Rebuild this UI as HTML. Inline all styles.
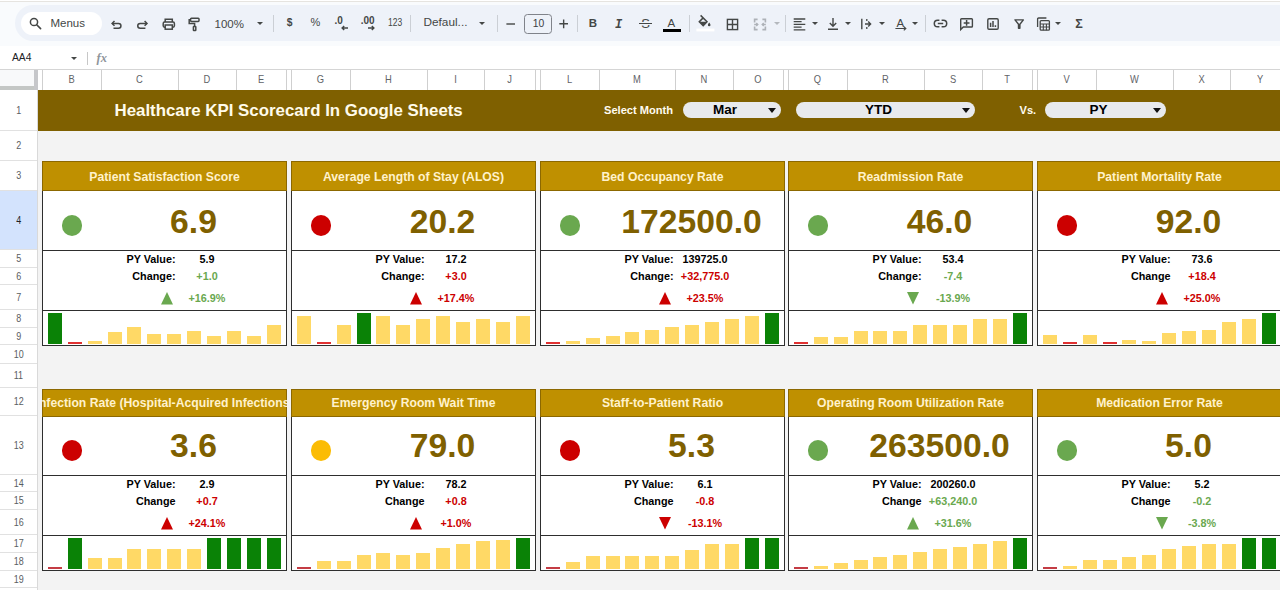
<!DOCTYPE html>
<html lang="en"><head><meta charset="utf-8"><title>Healthcare KPI Scorecard In Google Sheets</title>
<style>
*{box-sizing:border-box;margin:0;padding:0}
html,body{width:1280px;height:590px;overflow:hidden;background:#fff}
body{font-family:"Liberation Sans",Arial,sans-serif;color:#000}
#app{position:relative;width:1280px;height:590px;overflow:hidden;background:#fff}
i{font-style:normal}
/* top chrome */
.topline{position:absolute;left:0;top:1px;width:1280px;height:1px;background:#e6e4e0}
.tb-bg{position:absolute;left:0;top:2px;width:1280px;height:44px;background:#f9fbfd}
.tb{position:absolute;left:15px;top:5px;width:1300px;height:36px;border-radius:18px;background:#eef2f9}
.search{position:absolute;left:21px;top:12px;width:81px;height:23px;border-radius:12px;background:#fff}
.search span{position:absolute;left:29.5px;top:4px;font-size:11.5px;line-height:14px;color:#444746}
.tbt{position:absolute;font-size:11.5px;line-height:14px;color:#444746;white-space:nowrap}
.sep{position:absolute;top:15px;width:1px;height:17px;background:#cbcfd5}
.ico{position:absolute;overflow:visible}
.fbar{position:absolute;left:0;top:46px;width:1280px;height:23px;background:#fff}
.fbar .nm{position:absolute;left:12px;top:5px;font-size:10.3px;line-height:14px;color:#202124}
.fbar .vs{position:absolute;left:87px;top:6px;width:1px;height:13px;background:#c7c7c7}
.fbar .fx{position:absolute;left:96.5px;top:4px;font-size:12.5px;line-height:16px;color:#8f959b;font-style:italic;font-weight:bold;font-family:"Liberation Serif",serif}
/* headers */
.colhdr{position:absolute;left:0;top:69px;width:1280px;height:21px;background:#fff;border-top:1px solid #d5d5d5}
.ch{position:absolute;top:0;height:19px;line-height:20px;text-align:center;font-size:10.4px;color:#5f6368;transform:scaleX(.9)}
.cl{position:absolute;top:0;width:1px;height:20px;background:#cfcfcf}
.corner{position:absolute;left:0;top:70px;width:34px;height:16px;background:#f8f9fa}
.fz-v{position:absolute;left:34px;top:70px;width:4px;height:20px;background:#c6c7ca}
.fz-h{position:absolute;left:0;top:86px;width:34px;height:4px;background:#c4c7c5}
.rowhdr{position:absolute;left:0;top:90px;width:38px;height:500px;background:#fff;border-right:1px solid #d9d9d9}
.rh{position:absolute;left:0;width:37px;text-align:center;font-size:10.2px;color:#5a5d61;border-bottom:1px solid #e1e1e1}
.rh.sel{background:#d3e3fd;color:#1f1f1f}
/* sheet */
.sheet{position:absolute;left:38px;top:90px;width:1242px;height:500px;background:#f3f3f3;overflow:hidden}
.band{position:absolute;left:0;top:0;width:1242px;height:41px;background:#7f6000}
.title{position:absolute;left:76.5px;top:11px;font-size:16.85px;line-height:20px;font-weight:bold;color:#fffbea;white-space:nowrap}
.lbl{position:absolute;top:13px;font-size:11.1px;line-height:14px;font-weight:bold;color:#fffcf0;white-space:nowrap}
.pill{position:absolute;top:12px;height:16px;border-radius:8px;background:#e8eaed}
.pill span{position:absolute;left:0;right:14px;top:0;text-align:center;font-size:13.5px;line-height:16px;font-weight:bold;color:#000}
.dd{position:absolute;right:5px;top:6px;width:0;height:0;border-left:4px solid transparent;border-right:4px solid transparent;border-top:5px solid #111}
.card{position:absolute;width:245px}
.chd{background:#bf9000;box-shadow:inset 0 0 0 1px rgba(70,50,0,.42);color:#fff2cc;font-weight:bold;font-size:12.2px;text-align:center;white-space:nowrap;overflow:hidden;position:relative}
.chd span{position:absolute;left:50%;top:1px;transform:translateX(-50%)}
.cbody{position:relative;background:#fff;border:1px solid #2e2e2e;border-top:0}
.big{position:relative;height:58px}
.dot{position:absolute;left:18.6px;top:24.4px;width:20.8px;height:20.8px;border-radius:50%}
.val{position:absolute;left:58px;width:185px;top:7.5px;height:46px;line-height:46px;text-align:center;font-size:32.5px;transform:scaleX(1.036);font-weight:bold;color:#7f6000;white-space:nowrap}
.det{position:relative;height:61px;border-top:1px solid #2e2e2e;border-bottom:1px solid #2e2e2e}
.r{position:absolute;left:0;width:243px;font-size:10.8px;font-weight:bold;line-height:14px;white-space:nowrap}
.r .k{position:absolute;right:110.5px;top:0;text-align:right}
.r .v{position:absolute;left:135px;width:58px;text-align:center;top:0}
.r1{top:0.9px}.r2{top:17.8px}.r3{top:40px}
.tri{position:absolute;right:2.1px;top:1.4px;width:12px;height:12.4px}
.spark{position:relative;height:34px}
.spark b{position:absolute;bottom:1px;width:14px;display:block}
.spark .g{background:#0a8206}.spark .r{background:#e03131}.spark .rd{background:#c43c44}.spark .y{background:#ffd966}
.tdd{position:absolute;top:22px;width:0;height:0;border-left:3px solid transparent;border-right:3px solid transparent;border-top:3.5px solid #444746}
.tdd.dis{border-top-color:#b4b8bd}
.fsz{position:absolute;left:524px;top:14px;width:28px;height:20px;border:1px solid #80838a;border-radius:3.5px;text-align:center;font-size:11.5px;line-height:16px;color:#3c4043}
.fsz span{display:inline-block;transform:scaleX(.9)}
.rh span{display:inline-block;transform:scaleX(.88)}

</style></head>
<body>
<div id="app">
<div class="topline"></div>
<div class="tb-bg"></div>
<div class="tb"></div>
<div class="search"><svg class="ico" style="left:8px;top:5px" width="13" height="13" viewBox="0 0 13 13"><circle cx="5" cy="5" r="3.6" fill="none" stroke="#444746" stroke-width="1.5"/><path d="M7.7 7.7 L11.6 11.6" stroke="#444746" stroke-width="1.6" stroke-linecap="round"/></svg><span>Menus</span></div>
<!-- undo -->
<svg class="ico" style="left:110px;top:17px" width="14" height="14" viewBox="0 0 14 14" fill="none" stroke="#444746" stroke-width="1.5"><path d="M4.5 4.0 L2.1 6.4 L4.5 8.8"/><path d="M2.3 6.4 H8.5 a2.45 2.45 0 0 1 0 4.9 H3.5"/></svg>
<!-- redo -->
<svg class="ico" style="left:135px;top:17px" width="14" height="14" viewBox="0 0 14 14" fill="none" stroke="#444746" stroke-width="1.5"><path d="M9.6 4.0 L12 6.4 L9.6 8.8"/><path d="M11.8 6.4 H5.2 a2.45 2.45 0 0 0 0 4.9 H10.4"/></svg>
<!-- print -->
<svg class="ico" style="left:161px;top:17px" width="16" height="14" viewBox="0 0 16 14" fill="none" stroke="#444746" stroke-width="1.5"><path d="M4.2 5 V2.3 H11.3 V5"/><rect x="2.2" y="5" width="11.2" height="5.2" rx="1.4"/><rect x="4.2" y="8" width="7.1" height="4.2" fill="#eef2f9"/></svg>
<!-- paint format -->
<svg class="ico" style="left:187px;top:16px" width="15" height="16" viewBox="0 0 15 16" fill="none" stroke="#444746" stroke-width="1.5"><rect x="3.6" y="2.2" width="8.4" height="3.2" rx="0.8"/><path d="M3.6 3.8 H2.2 V7.6 H7.6 V10.4"/><rect x="6.4" y="10.6" width="2.4" height="3.8" rx="0.5"/></svg>
<div class="tbt" style="left:214.5px;top:17px">100%</div>
<i class="tdd" style="left:256.5px"></i>
<div class="sep" style="left:273px"></div>
<div class="tbt" style="left:286.7px;top:16px;font-size:10.3px;font-weight:bold">$</div>
<div class="tbt" style="left:310.5px;top:14.7px;font-size:11px">%</div>
<div class="tbt" style="left:334.5px;top:14.4px;font-size:10px;font-weight:bold">.0</div>
<svg class="ico" style="left:341.3px;top:25.1px" width="8" height="6" viewBox="0 0 8 6" fill="none" stroke="#444746" stroke-width="1.4"><path d="M7 3 H1.2 M3.2 0.9 L1.1 3 L3.2 5.1"/></svg>
<div class="tbt" style="left:360.7px;top:14.4px;font-size:10px;font-weight:bold">.00</div>
<svg class="ico" style="left:366.8px;top:25.1px" width="8" height="6" viewBox="0 0 8 6" fill="none" stroke="#444746" stroke-width="1.4"><path d="M1 3 H6.8 M4.8 0.9 L6.9 3 L4.8 5.1"/></svg>
<div class="tbt" style="left:387.5px;top:16.4px;font-size:10px;transform:scaleX(.85);transform-origin:0 0">123</div>
<div class="sep" style="left:410px"></div>
<div class="tbt" style="left:423.5px;top:15.2px;font-size:11.8px">Defaul...</div>
<i class="tdd" style="left:479px"></i>
<div class="sep" style="left:497px"></div>
<svg class="ico" style="left:505px;top:18px" width="12" height="12" viewBox="0 0 12 12"><path d="M1.4 6 H10" stroke="#444746" stroke-width="1.4"/></svg>
<div class="fsz"><span>10</span></div>
<svg class="ico" style="left:558px;top:18px" width="12" height="12" viewBox="0 0 12 12"><path d="M1.3 5.8 H10 M5.65 1.5 V10.2" stroke="#444746" stroke-width="1.4"/></svg>
<div class="sep" style="left:577px"></div>
<div class="tbt" style="left:588.7px;top:16.3px;font-size:11.5px;font-weight:bold">B</div>
<div class="tbt" style="left:615px;top:18px;font-family:'Liberation Mono',monospace;font-style:italic;font-weight:bold;font-size:12px;width:9px;overflow:hidden">I</div>
<!-- strikethrough -->
<div class="tbt" style="left:641.2px;top:17.2px;font-size:13px">S</div>
<div style="position:absolute;left:639px;top:22.8px;width:13px;height:1.4px;background:#444746;box-shadow:0 -1px 0 #eef2f9,0 1px 0 #eef2f9"></div>
<!-- text colour -->
<div class="tbt" style="left:667.5px;top:15.5px;font-size:11.5px">A</div>
<div style="position:absolute;left:663px;top:28.5px;width:18px;height:3px;background:#000"></div>
<div class="sep" style="left:689px"></div>
<!-- fill colour -->
<svg class="ico" style="left:696px;top:14px" width="19" height="18" viewBox="0 0 19 18"><path d="M4.6 1.4 L11 7.8 L7.2 11.6 L3.3 7.7 L6.9 4.1" fill="none" stroke="#444746" stroke-width="1.5"/><path d="M3.6 7.8 H10.8 L7.2 11.4 Z" fill="#444746"/><path d="M13.2 8.6 c.9 1.2 1.3 1.8 1.3 2.4 a1.3 1.3 0 0 1 -2.6 0 c0 -.6 .4 -1.2 1.3 -2.4z" fill="#444746"/><rect x="0.4" y="14.6" width="18" height="2.8" fill="#fff"/></svg>
<!-- borders -->
<svg class="ico" style="left:726px;top:18px" width="13" height="13" viewBox="0 0 13 13" fill="none" stroke="#444746" stroke-width="1.4"><rect x="1.4" y="1.4" width="10.2" height="10.2"/><path d="M6.5 1.4 V11.6 M1.4 6.5 H11.6"/></svg>
<!-- merge (disabled) -->
<svg class="ico" style="left:753px;top:18px" width="14" height="13" viewBox="0 0 14 13" fill="none" stroke="#adb1b7" stroke-width="1.6"><path d="M4.6 1.4 H1.6 V4.4 M9.4 1.4 H12.4 V4.4 M4.6 11.6 H1.6 V8.6 M9.4 11.6 H12.4 V8.6"/><path d="M1.2 6.5 H4.6 M3.3 5.1 L4.8 6.5 L3.3 7.9 M12.8 6.5 H9.4 M10.7 5.1 L9.2 6.5 L10.7 7.9" stroke-width="1.3"/></svg>
<i class="tdd dis" style="left:773.5px"></i>
<div class="sep" style="left:785px"></div>
<!-- h-align -->
<svg class="ico" style="left:793px;top:18px" width="13" height="13" viewBox="0 0 13 13" stroke="#444746" stroke-width="1.3"><path d="M0.7 1 H12.3 M0.7 3.7 H8.6 M0.7 6.4 H12.3 M0.7 9.1 H8.6 M0.7 11.8 H12.3"/></svg>
<i class="tdd" style="left:811.5px"></i>
<!-- v-align -->
<svg class="ico" style="left:827px;top:17px" width="12" height="14" viewBox="0 0 12 14" fill="none" stroke="#444746" stroke-width="1.4"><path d="M6 1 V9 M2.8 6 L6 9.2 L9.2 6 M1 12.3 H11"/></svg>
<i class="tdd" style="left:845px"></i>
<!-- wrap -->
<svg class="ico" style="left:860px;top:18px" width="12" height="12" viewBox="0 0 12 12" fill="none" stroke="#444746" stroke-width="1.4"><path d="M1.8 0.8 V11.2"/><path d="M5 6 H10.4 M8.2 3.6 L10.6 6 L8.2 8.4" /><path d="M6.8 1 V3 M6.8 9 V11" stroke-width="1.3"/></svg>
<i class="tdd" style="left:878.5px"></i>
<!-- rotate -->
<div class="tbt" style="left:896.5px;top:15.5px;font-size:11.5px">A</div>
<svg class="ico" style="left:895px;top:26px" width="12" height="5" viewBox="0 0 12 5" fill="none" stroke="#444746" stroke-width="1.2"><path d="M0.4 2.5 H10.6 M8.8 0.6 L10.8 2.5 L8.8 4.4"/></svg>
<i class="tdd" style="left:911.5px"></i>
<div class="sep" style="left:925px"></div>
<!-- link -->
<svg class="ico" style="left:933px;top:19px" width="15" height="9" viewBox="0 0 15 9" fill="none" stroke="#444746" stroke-width="1.5"><path d="M6.4 1.2 H4.6 a3.3 3.3 0 0 0 0 6.6 H6.4 M8.6 1.2 H10.4 a3.3 3.3 0 0 1 0 6.6 H8.6 M4.8 4.5 H10.2"/></svg>
<!-- comment -->
<svg class="ico" style="left:959px;top:17px" width="15" height="14" viewBox="0 0 15 14" fill="none" stroke="#444746" stroke-width="1.4"><path d="M1.7 12.6 V2.6 a0.8 0.8 0 0 1 .8 -.8 H12.6 a0.8 0.8 0 0 1 .8 .8 V9.2 a0.8 0.8 0 0 1 -.8 .8 H4.3 Z"/><path d="M7.6 3.1 V8.7 M4.7 5.9 H10.5" stroke-width="1.5"/></svg>
<!-- chart -->
<svg class="ico" style="left:986px;top:17px" width="14" height="14" viewBox="0 0 14 14" fill="none" stroke="#444746" stroke-width="1.4"><rect x="1.8" y="1.8" width="10.4" height="10.4" rx="1.2"/><path d="M4.6 5.8 V10 M7 4 V10 M9.4 8.2 V10" stroke-width="1.5"/></svg>
<!-- filter -->
<svg class="ico" style="left:1013px;top:18px" width="12" height="12" viewBox="0 0 12 12" fill="none" stroke="#444746" stroke-width="1.4"><path d="M2 1.9 H10.4 L6.9 6.2 V10.2 H5.5 V6.2 Z" stroke-linejoin="round"/></svg>
<!-- table views -->
<svg class="ico" style="left:1036px;top:16px" width="15" height="16" viewBox="0 0 15 16" fill="none" stroke="#444746" stroke-width="1.3"><path d="M1.6 11 V3 a1 1 0 0 1 1 -1 H10.4"/><rect x="4.2" y="4.6" width="9.2" height="9.6" rx="1"/><path d="M4.2 8 H13.4 M4.2 11 H13.4 M7.3 8 V14.2 M10.4 8 V14.2" stroke-width="1.1"/></svg>
<i class="tdd" style="left:1055px"></i>
<!-- sigma -->
<div class="tbt" style="left:1075.3px;top:17px;font-size:12.5px;font-weight:bold">&Sigma;</div>
<!-- formula bar -->
<div class="fbar"><span class="nm">AA4</span><i class="tdd" style="left:70.7px;top:10.5px"></i><i class="vs"></i><span class="fx">fx</span></div>
<div class="colhdr">
<div class="ch" style="left:42px;width:59px">B</div>
<div class="ch" style="left:101px;width:77px">C</div>
<div class="ch" style="left:178px;width:58px">D</div>
<div class="ch" style="left:236px;width:50px">E</div>
<div class="ch" style="left:291px;width:59px">G</div>
<div class="ch" style="left:350px;width:77px">H</div>
<div class="ch" style="left:427px;width:57px">I</div>
<div class="ch" style="left:484px;width:51px">J</div>
<div class="ch" style="left:540px;width:59px">L</div>
<div class="ch" style="left:599px;width:76px">M</div>
<div class="ch" style="left:675px;width:58px">N</div>
<div class="ch" style="left:733px;width:50px">O</div>
<div class="ch" style="left:788px;width:59px">Q</div>
<div class="ch" style="left:847px;width:77px">R</div>
<div class="ch" style="left:924px;width:58px">S</div>
<div class="ch" style="left:982px;width:50px">T</div>
<div class="ch" style="left:1037px;width:59px">V</div>
<div class="ch" style="left:1096px;width:77px">W</div>
<div class="ch" style="left:1173px;width:57px">X</div>
<div class="ch" style="left:1230px;width:60px">Y</div>
<i class="cl" style="left:42px"></i>
<i class="cl" style="left:101px"></i>
<i class="cl" style="left:178px"></i>
<i class="cl" style="left:235.5px"></i>
<i class="cl" style="left:286px"></i>
<i class="cl" style="left:291px"></i>
<i class="cl" style="left:350px"></i>
<i class="cl" style="left:427px"></i>
<i class="cl" style="left:484px"></i>
<i class="cl" style="left:535px"></i>
<i class="cl" style="left:540px"></i>
<i class="cl" style="left:599px"></i>
<i class="cl" style="left:675px"></i>
<i class="cl" style="left:733px"></i>
<i class="cl" style="left:783px"></i>
<i class="cl" style="left:788px"></i>
<i class="cl" style="left:847px"></i>
<i class="cl" style="left:924px"></i>
<i class="cl" style="left:982px"></i>
<i class="cl" style="left:1032px"></i>
<i class="cl" style="left:1037px"></i>
<i class="cl" style="left:1096px"></i>
<i class="cl" style="left:1173px"></i>
<i class="cl" style="left:1230px"></i>
</div>
<div class="corner"></div><div class="fz-v"></div><div class="fz-h"></div>
<div class="rowhdr">
<div class="rh" style="top:0px;height:41px;line-height:41px"><span>1</span></div>
<div class="rh" style="top:41px;height:30px;line-height:30px"><span>2</span></div>
<div class="rh" style="top:71px;height:30px;line-height:30px"><span>3</span></div>
<div class="rh sel" style="top:101px;height:59px;line-height:59px"><span>4</span></div>
<div class="rh" style="top:160px;height:18px;line-height:18px"><span>5</span></div>
<div class="rh" style="top:178px;height:17px;line-height:17px"><span>6</span></div>
<div class="rh" style="top:195px;height:25px;line-height:25px"><span>7</span></div>
<div class="rh" style="top:220px;height:18px;line-height:18px"><span>8</span></div>
<div class="rh" style="top:238px;height:17px;line-height:17px"><span>9</span></div>
<div class="rh" style="top:255px;height:19px;line-height:19px"><span>10</span></div>
<div class="rh" style="top:274px;height:24px;line-height:24px"><span>11</span></div>
<div class="rh" style="top:298px;height:28px;line-height:28px"><span>12</span></div>
<div class="rh" style="top:326px;height:59px;line-height:59px"><span>13</span></div>
<div class="rh" style="top:385px;height:17px;line-height:17px"><span>14</span></div>
<div class="rh" style="top:402px;height:18px;line-height:18px"><span>15</span></div>
<div class="rh" style="top:420px;height:25px;line-height:25px"><span>16</span></div>
<div class="rh" style="top:445px;height:18px;line-height:18px"><span>17</span></div>
<div class="rh" style="top:463px;height:18px;line-height:18px"><span>18</span></div>
<div class="rh" style="top:481px;height:17px;line-height:17px"><span>19</span></div>
<div class="rh" style="top:498px;height:18px;line-height:18px"><span>20</span></div>
</div>
<div class="sheet">
<div class="band"><div class="title">Healthcare KPI Scorecard In Google Sheets</div><div class="lbl" style="left:566px">Select Month</div><div class="pill" style="left:645px;width:98px"><span>Mar</span><i class="dd"></i></div><div class="pill" style="left:758px;width:179px"><span>YTD</span><i class="dd"></i></div><div class="lbl" style="left:981.5px">Vs.</div><div class="pill" style="left:1007px;width:121px"><span>PY</span><i class="dd"></i></div></div>
<div class="card" style="left:4px;top:71px">
 <div class="chd" style="height:30px;line-height:30px"><span>Patient Satisfaction Score</span></div>
 <div class="cbody">
  <div class="big" style="height:59px"><i class="dot" style="background:#6aa84f;top:24.4px"></i><div class="val" style="top:7.5px">6.9</div></div>
  <div class="det">
   <div class="r r1"><span class="k">PY Value:</span><span class="v">5.9</span></div>
   <div class="r r2"><span class="k">Change:</span><span class="v" style="color:#6aa84f">+1.0</span></div>
   <div class="r r3"><span class="k"><svg class="tri" viewBox="0 0 12 12" preserveAspectRatio="none"><path d="M6 0 L12 12 L0 12 Z" fill="#6aa84f"/></svg></span><span class="v" style="color:#6aa84f">+16.9%</span></div>
  </div>
  <div class="spark"><b class="g" style="left:5.0px;height:31.1px"></b><b class="r" style="left:24.9px;height:1.6px"></b><b class="y" style="left:44.7px;height:2.6px"></b><b class="y" style="left:64.6px;height:11.6px"></b><b class="y" style="left:84.4px;height:16.7px"></b><b class="y" style="left:104.3px;height:10px"></b><b class="y" style="left:124.2px;height:10px"></b><b class="y" style="left:144.0px;height:13px"></b><b class="y" style="left:163.9px;height:7.7px"></b><b class="y" style="left:183.7px;height:12.8px"></b><b class="y" style="left:203.6px;height:7.7px"></b><b class="y" style="left:223.5px;height:18.7px"></b></div>
 </div>
</div>
<div class="card" style="left:253px;top:71px">
 <div class="chd" style="height:30px;line-height:30px"><span>Average Length of Stay (ALOS)</span></div>
 <div class="cbody">
  <div class="big" style="height:59px"><i class="dot" style="background:#cc0000;top:24.4px"></i><div class="val" style="top:7.5px">20.2</div></div>
  <div class="det">
   <div class="r r1"><span class="k">PY Value:</span><span class="v">17.2</span></div>
   <div class="r r2"><span class="k">Change:</span><span class="v" style="color:#cc0000">+3.0</span></div>
   <div class="r r3"><span class="k"><svg class="tri" viewBox="0 0 12 12" preserveAspectRatio="none"><path d="M6 0 L12 12 L0 12 Z" fill="#cc0000"/></svg></span><span class="v" style="color:#cc0000">+17.4%</span></div>
  </div>
  <div class="spark"><b class="y" style="left:5.0px;height:28px"></b><b class="r" style="left:24.9px;height:1.6px"></b><b class="y" style="left:44.7px;height:18.7px"></b><b class="g" style="left:64.6px;height:31.1px"></b><b class="y" style="left:84.4px;height:28px"></b><b class="y" style="left:104.3px;height:18.7px"></b><b class="y" style="left:124.2px;height:24.6px"></b><b class="y" style="left:144.0px;height:28px"></b><b class="y" style="left:163.9px;height:21.7px"></b><b class="y" style="left:183.7px;height:24.6px"></b><b class="y" style="left:203.6px;height:21.7px"></b><b class="y" style="left:223.5px;height:28px"></b></div>
 </div>
</div>
<div class="card" style="left:502px;top:71px">
 <div class="chd" style="height:30px;line-height:30px"><span>Bed Occupancy Rate</span></div>
 <div class="cbody">
  <div class="big" style="height:59px"><i class="dot" style="background:#6aa84f;top:24.4px"></i><div class="val" style="top:7.5px">172500.0</div></div>
  <div class="det">
   <div class="r r1"><span class="k">PY Value:</span><span class="v">139725.0</span></div>
   <div class="r r2"><span class="k">Change:</span><span class="v" style="color:#cc0000">+32,775.0</span></div>
   <div class="r r3"><span class="k"><svg class="tri" viewBox="0 0 12 12" preserveAspectRatio="none"><path d="M6 0 L12 12 L0 12 Z" fill="#cc0000"/></svg></span><span class="v" style="color:#cc0000">+23.5%</span></div>
  </div>
  <div class="spark"><b class="r" style="left:5.0px;height:1.6px"></b><b class="y" style="left:24.9px;height:3.5px"></b><b class="y" style="left:44.7px;height:6.5px"></b><b class="y" style="left:64.6px;height:8.5px"></b><b class="y" style="left:84.4px;height:11.6px"></b><b class="y" style="left:104.3px;height:13.6px"></b><b class="y" style="left:124.2px;height:16.7px"></b><b class="y" style="left:144.0px;height:19.5px"></b><b class="y" style="left:163.9px;height:22.5px"></b><b class="y" style="left:183.7px;height:25.2px"></b><b class="y" style="left:203.6px;height:28.2px"></b><b class="g" style="left:223.5px;height:31.1px"></b></div>
 </div>
</div>
<div class="card" style="left:750px;top:71px">
 <div class="chd" style="height:30px;line-height:30px"><span>Readmission Rate</span></div>
 <div class="cbody">
  <div class="big" style="height:59px"><i class="dot" style="background:#6aa84f;top:24.4px"></i><div class="val" style="top:7.5px">46.0</div></div>
  <div class="det">
   <div class="r r1"><span class="k">PY Value:</span><span class="v">53.4</span></div>
   <div class="r r2"><span class="k">Change:</span><span class="v" style="color:#6aa84f">-7.4</span></div>
   <div class="r r3"><span class="k"><svg class="tri" viewBox="0 0 12 12" preserveAspectRatio="none"><path d="M0 0 L12 0 L6 12 Z" fill="#6aa84f"/></svg></span><span class="v" style="color:#6aa84f">-13.9%</span></div>
  </div>
  <div class="spark"><b class="r" style="left:5.0px;height:1.6px"></b><b class="y" style="left:24.9px;height:6.9px"></b><b class="y" style="left:44.7px;height:6.9px"></b><b class="y" style="left:64.6px;height:12.8px"></b><b class="y" style="left:84.4px;height:12.8px"></b><b class="y" style="left:104.3px;height:12.8px"></b><b class="y" style="left:124.2px;height:18.7px"></b><b class="y" style="left:144.0px;height:18.7px"></b><b class="y" style="left:163.9px;height:18.7px"></b><b class="y" style="left:183.7px;height:25.2px"></b><b class="y" style="left:203.6px;height:25.2px"></b><b class="g" style="left:223.5px;height:31.1px"></b></div>
 </div>
</div>
<div class="card" style="left:999px;top:71px">
 <div class="chd" style="height:30px;line-height:30px"><span>Patient Mortality Rate</span></div>
 <div class="cbody">
  <div class="big" style="height:59px"><i class="dot" style="background:#cc0000;top:24.4px"></i><div class="val" style="top:7.5px">92.0</div></div>
  <div class="det">
   <div class="r r1"><span class="k">PY Value:</span><span class="v">73.6</span></div>
   <div class="r r2"><span class="k">Change</span><span class="v" style="color:#cc0000">+18.4</span></div>
   <div class="r r3"><span class="k"><svg class="tri" viewBox="0 0 12 12" preserveAspectRatio="none"><path d="M6 0 L12 12 L0 12 Z" fill="#cc0000"/></svg></span><span class="v" style="color:#cc0000">+25.0%</span></div>
  </div>
  <div class="spark"><b class="y" style="left:5.0px;height:9.1px"></b><b class="r" style="left:24.9px;height:1.6px"></b><b class="y" style="left:44.7px;height:9.1px"></b><b class="r" style="left:64.6px;height:1.6px"></b><b class="y" style="left:84.4px;height:4.1px"></b><b class="y" style="left:104.3px;height:2.8px"></b><b class="y" style="left:124.2px;height:10.8px"></b><b class="y" style="left:144.0px;height:12.8px"></b><b class="y" style="left:163.9px;height:14.4px"></b><b class="y" style="left:183.7px;height:22.5px"></b><b class="y" style="left:203.6px;height:24.6px"></b><b class="g" style="left:223.5px;height:31.1px"></b></div>
 </div>
</div>
<div class="card" style="left:4px;top:299px">
 <div class="chd" style="height:28px;line-height:28px"><span style="top:0">Infection Rate (Hospital-Acquired Infections)</span></div>
 <div class="cbody">
  <div class="big" style="height:58px"><i class="dot" style="background:#cc0000;top:23.0px"></i><div class="val" style="top:6.2px">3.6</div></div>
  <div class="det">
   <div class="r r1"><span class="k">PY Value:</span><span class="v">2.9</span></div>
   <div class="r r2"><span class="k">Change</span><span class="v" style="color:#cc0000">+0.7</span></div>
   <div class="r r3"><span class="k"><svg class="tri" viewBox="0 0 12 12" preserveAspectRatio="none"><path d="M6 0 L12 12 L0 12 Z" fill="#cc0000"/></svg></span><span class="v" style="color:#cc0000">+24.1%</span></div>
  </div>
  <div class="spark"><b class="r rd" style="left:5.0px;height:2px"></b><b class="g" style="left:24.9px;height:31.1px"></b><b class="y" style="left:44.7px;height:10.6px"></b><b class="y" style="left:64.6px;height:10.6px"></b><b class="y" style="left:84.4px;height:20.5px"></b><b class="y" style="left:104.3px;height:20.5px"></b><b class="y" style="left:124.2px;height:20.5px"></b><b class="y" style="left:144.0px;height:20.5px"></b><b class="g" style="left:163.9px;height:31.1px"></b><b class="g" style="left:183.7px;height:31.1px"></b><b class="g" style="left:203.6px;height:31.1px"></b><b class="g" style="left:223.5px;height:31.1px"></b></div>
 </div>
</div>
<div class="card" style="left:253px;top:299px">
 <div class="chd" style="height:28px;line-height:28px"><span style="top:0">Emergency Room Wait Time</span></div>
 <div class="cbody">
  <div class="big" style="height:58px"><i class="dot" style="background:#fbbc04;top:23.0px"></i><div class="val" style="top:6.2px">79.0</div></div>
  <div class="det">
   <div class="r r1"><span class="k">PY Value:</span><span class="v">78.2</span></div>
   <div class="r r2"><span class="k">Change</span><span class="v" style="color:#cc0000">+0.8</span></div>
   <div class="r r3"><span class="k"><svg class="tri" viewBox="0 0 12 12" preserveAspectRatio="none"><path d="M6 0 L12 12 L0 12 Z" fill="#cc0000"/></svg></span><span class="v" style="color:#cc0000">+1.0%</span></div>
  </div>
  <div class="spark"><b class="r rd" style="left:5.0px;height:2px"></b><b class="y" style="left:24.9px;height:8.5px"></b><b class="y" style="left:44.7px;height:8.5px"></b><b class="y" style="left:64.6px;height:14.4px"></b><b class="y" style="left:84.4px;height:15.6px"></b><b class="y" style="left:104.3px;height:14.4px"></b><b class="y" style="left:124.2px;height:15.6px"></b><b class="y" style="left:144.0px;height:21.5px"></b><b class="y" style="left:163.9px;height:25.2px"></b><b class="y" style="left:183.7px;height:28px"></b><b class="y" style="left:203.6px;height:29.5px"></b><b class="g" style="left:223.5px;height:31.1px"></b></div>
 </div>
</div>
<div class="card" style="left:502px;top:299px">
 <div class="chd" style="height:28px;line-height:28px"><span style="top:0">Staff-to-Patient Ratio</span></div>
 <div class="cbody">
  <div class="big" style="height:58px"><i class="dot" style="background:#cc0000;top:23.0px"></i><div class="val" style="top:6.2px">5.3</div></div>
  <div class="det">
   <div class="r r1"><span class="k">PY Value:</span><span class="v">6.1</span></div>
   <div class="r r2"><span class="k">Change</span><span class="v" style="color:#cc0000">-0.8</span></div>
   <div class="r r3"><span class="k"><svg class="tri" viewBox="0 0 12 12" preserveAspectRatio="none"><path d="M0 0 L12 0 L6 12 Z" fill="#cc0000"/></svg></span><span class="v" style="color:#cc0000">-13.1%</span></div>
  </div>
  <div class="spark"><b class="r rd" style="left:5.0px;height:2px"></b><b class="y" style="left:24.9px;height:6.9px"></b><b class="y" style="left:44.7px;height:12.8px"></b><b class="y" style="left:64.6px;height:12.8px"></b><b class="y" style="left:84.4px;height:12.8px"></b><b class="y" style="left:104.3px;height:12.8px"></b><b class="y" style="left:124.2px;height:12.8px"></b><b class="y" style="left:144.0px;height:18.7px"></b><b class="y" style="left:163.9px;height:25.2px"></b><b class="y" style="left:183.7px;height:25.2px"></b><b class="g" style="left:203.6px;height:31.1px"></b><b class="g" style="left:223.5px;height:31.1px"></b></div>
 </div>
</div>
<div class="card" style="left:750px;top:299px">
 <div class="chd" style="height:28px;line-height:28px"><span style="top:0">Operating Room Utilization Rate</span></div>
 <div class="cbody">
  <div class="big" style="height:58px"><i class="dot" style="background:#6aa84f;top:23.0px"></i><div class="val" style="top:6.2px">263500.0</div></div>
  <div class="det">
   <div class="r r1"><span class="k">PY Value:</span><span class="v">200260.0</span></div>
   <div class="r r2"><span class="k">Change</span><span class="v" style="color:#6aa84f">+63,240.0</span></div>
   <div class="r r3"><span class="k"><svg class="tri" viewBox="0 0 12 12" preserveAspectRatio="none"><path d="M6 0 L12 12 L0 12 Z" fill="#6aa84f"/></svg></span><span class="v" style="color:#6aa84f">+31.6%</span></div>
  </div>
  <div class="spark"><b class="r rd" style="left:5.0px;height:2px"></b><b class="y" style="left:24.9px;height:3.5px"></b><b class="y" style="left:44.7px;height:6.5px"></b><b class="y" style="left:64.6px;height:9.1px"></b><b class="y" style="left:84.4px;height:11.6px"></b><b class="y" style="left:104.3px;height:14.4px"></b><b class="y" style="left:124.2px;height:17.5px"></b><b class="y" style="left:144.0px;height:20.1px"></b><b class="y" style="left:163.9px;height:22.5px"></b><b class="y" style="left:183.7px;height:25.2px"></b><b class="y" style="left:203.6px;height:28px"></b><b class="g" style="left:223.5px;height:31.1px"></b></div>
 </div>
</div>
<div class="card" style="left:999px;top:299px">
 <div class="chd" style="height:28px;line-height:28px"><span style="top:0">Medication Error Rate</span></div>
 <div class="cbody">
  <div class="big" style="height:58px"><i class="dot" style="background:#6aa84f;top:23.0px"></i><div class="val" style="top:6.2px">5.0</div></div>
  <div class="det">
   <div class="r r1"><span class="k">PY Value:</span><span class="v">5.2</span></div>
   <div class="r r2"><span class="k">Change</span><span class="v" style="color:#6aa84f">-0.2</span></div>
   <div class="r r3"><span class="k"><svg class="tri" viewBox="0 0 12 12" preserveAspectRatio="none"><path d="M0 0 L12 0 L6 12 Z" fill="#6aa84f"/></svg></span><span class="v" style="color:#6aa84f">-3.8%</span></div>
  </div>
  <div class="spark"><b class="r rd" style="left:5.0px;height:2px"></b><b class="y" style="left:24.9px;height:3.3px"></b><b class="y" style="left:44.7px;height:9.1px"></b><b class="y" style="left:64.6px;height:9.1px"></b><b class="y" style="left:84.4px;height:12px"></b><b class="y" style="left:104.3px;height:14.4px"></b><b class="y" style="left:124.2px;height:20.1px"></b><b class="y" style="left:144.0px;height:23px"></b><b class="y" style="left:163.9px;height:25.2px"></b><b class="y" style="left:183.7px;height:25.2px"></b><b class="g" style="left:203.6px;height:31.1px"></b><b class="g" style="left:223.5px;height:31.1px"></b></div>
 </div>
</div>
</div>
</div>
</body></html>
